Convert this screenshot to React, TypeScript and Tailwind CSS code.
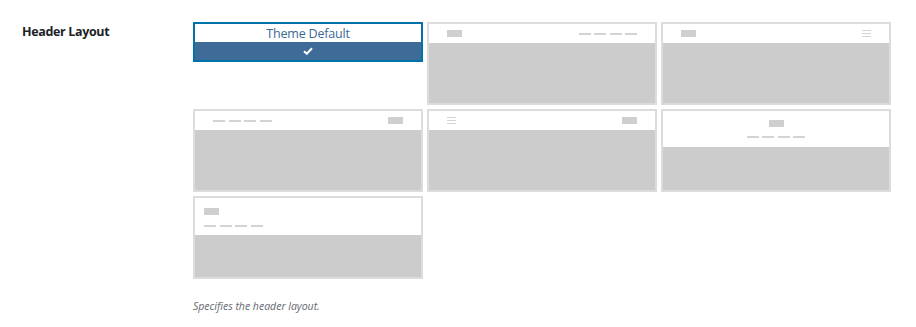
import React from "react";

const Logo = () => <div className="h-[7px] w-[15px] bg-[#cfcfcf]" />;
const Dashes = () => (
  <div className="flex gap-[3.5px]">
    <div className="h-[2px] w-[12px] bg-[#d4d4d4]" />
    <div className="h-[2px] w-[12px] bg-[#d4d4d4]" />
    <div className="h-[2px] w-[12px] bg-[#d4d4d4]" />
    <div className="h-[2px] w-[12px] bg-[#d4d4d4]" />
  </div>
);
const Burger = () => (
  <div className="flex w-[9px] flex-col gap-[2px]">
    <div className="h-px bg-[#d4d4d4]" />
    <div className="h-px bg-[#d4d4d4]" />
    <div className="h-px bg-[#d4d4d4]" />
  </div>
);

const Card = ({ children }: { children: React.ReactNode }) => (
  <div className="flex h-[83px] w-[230px] flex-col border-2 border-[#dcdcdc] bg-[#cccccc]">
    {children}
  </div>
);

const RowHeader = ({ left, right }: { left: React.ReactNode; right: React.ReactNode }) => (
  <div className="flex h-[19px] items-center justify-between bg-white px-[18px]">
    {left}
    {right}
  </div>
);

export default function App() {
  return (
    <div
      className="min-h-[327px] w-[916px] bg-white pl-[22px] pt-[22px]"
      style={{ fontFamily: '"Open Sans", "Noto Sans", sans-serif' }}
    >
      <div className="flex">
        <div className="w-[171px] pt-[2px] text-[12.5px] font-bold leading-[16px] tracking-[-0.35px] text-[#1d2327]">
          Header Layout
        </div>
        <div>
          <div className="grid grid-cols-[230px_230px_230px] gap-[4px]">
            <div className="flex h-[40px] w-[230px] flex-col self-start border-2 border-[#0073aa] bg-white">
              <div className="flex h-[18px] items-center justify-center pt-[2px] text-[12.5px] leading-[16px] tracking-[-0.2px] text-[#3b6894]">
                Theme Default
              </div>
              <div className="flex h-[18px] items-center justify-center bg-[#3e6b97]">
                <svg width="10" height="8" viewBox="0 0 10 8">
                  <path d="M1 4.2 L3.8 6.8 L9 1.3" fill="none" stroke="white" strokeWidth="2" />
                </svg>
              </div>
            </div>
            <Card>
              <RowHeader left={<Logo />} right={<Dashes />} />
            </Card>
            <Card>
              <RowHeader left={<Logo />} right={<Burger />} />
            </Card>
            <Card>
              <RowHeader left={<Dashes />} right={<Logo />} />
            </Card>
            <Card>
              <RowHeader left={<Burger />} right={<Logo />} />
            </Card>
            <Card>
              <div className="flex h-[36px] flex-col items-center bg-white pt-[9px]">
                <Logo />
                <div className="mt-[9px]">
                  <Dashes />
                </div>
              </div>
            </Card>
            <Card>
              <div className="flex h-[37px] flex-col items-start bg-white px-[9px] pt-[10px]">
                <Logo />
                <div className="mt-[10px]">
                  <Dashes />
                </div>
              </div>
            </Card>
          </div>
          <p className="mt-[20px] text-[10.5px] italic leading-[15px] text-[#646970]">
            Specifies the header layout.
          </p>
        </div>
      </div>
    </div>
  );
}
